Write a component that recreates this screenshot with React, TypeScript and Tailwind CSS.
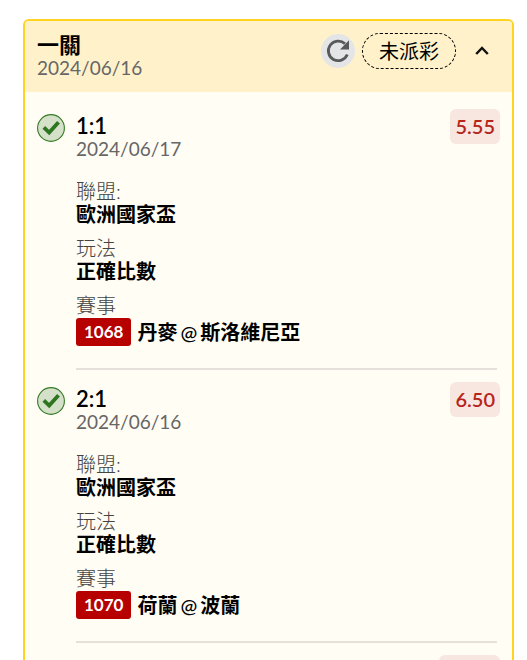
import React from 'react';

interface Selection {
  score: string;
  date: string;
  odds: string;
  league: string;
  market: string;
  matchId: string;
  home: string;
  away: string;
}

const selections: Selection[] = [
  { score: '1:1', date: '2024/06/17', odds: '5.55', league: '歐洲國家盃', market: '正確比數', matchId: '1068', home: '丹麥', away: '斯洛維尼亞' },
  { score: '2:1', date: '2024/06/16', odds: '6.50', league: '歐洲國家盃', market: '正確比數', matchId: '1070', home: '荷蘭', away: '波蘭' },
];

const CheckIcon = () => (
  <svg className="mt-[5px] h-7 w-7 shrink-0" viewBox="0 0 28 28" fill="none">
    <circle cx="14" cy="14" r="13.4" fill="#d5e0c8" stroke="#327a24" strokeWidth="1.1" />
    <path d="M6.8 13.4 12.2 18.6 21.5 8.2" stroke="#2e7520" strokeWidth="3.8" />
  </svg>
);

const SelectionRow: React.FC<{ item: Selection }> = ({ item }) => (
  <li className="flex gap-[11px] pt-3 pr-3 pl-3">
    <CheckIcon />
    <div className="min-w-0 flex-1">
      <div className="flex items-start justify-between">
        <div className="pt-[5px]">
          <h3 className="text-[22px] leading-[23px] font-semibold text-black">{item.score}</h3>
          <p className="text-[19px] leading-[23px] text-[#666]">{item.date}</p>
        </div>
        <span className="rounded-md bg-[#f8e7e0] px-[5px] text-[20px] leading-[35px] font-semibold text-[#b6251c]">{item.odds}</span>
      </div>
      <dl className="mt-5 mr-[3px] border-b-2 border-[#e5e1da] pb-[22px] text-[20px] leading-[23px]">
        <dt className="font-light text-[#444]">聯盟:</dt>
        <dd className="mb-[11px] font-bold text-black">{item.league}</dd>
        <dt className="font-light text-[#444]">玩法</dt>
        <dd className="mb-[11px] font-bold text-black">{item.market}</dd>
        <dt className="font-light text-[#444]">賽事</dt>
        <dd className="flex items-center gap-[6px] pt-px font-bold text-black">
          <span className="rounded-[3px] bg-[#b70000] px-2 text-[17px] leading-7 text-white">{item.matchId}</span>
          <span className="flex gap-[3px]">
            <span>{item.home}</span>
            <span className="font-medium">@</span>
            <span>{item.away}</span>
          </span>
        </dd>
      </dl>
    </div>
  </li>
);

export default function App() {
  return (
    <main className="h-screen overflow-hidden bg-white pt-[19px] pr-[13px] pl-[23px] font-['Lato','Noto_Sans_CJK_TC',sans-serif]">
      <section className="rounded-md border-2 border-[#ffd322] bg-[#fffdf4]">
        <header className="flex items-start justify-between rounded-t-sm bg-[#fff2cb] pt-3 pr-[22px] pb-[13px] pl-3">
          <div>
            <h2 className="text-[22px] leading-[23px] font-bold text-black">一關</h2>
            <p className="text-[19px] leading-[23px] text-[#666]">2024/06/16</p>
          </div>
          <div className="flex items-center">
            <button type="button" aria-label="重新整理" className="mr-[7px] flex h-[34px] w-[34px] items-center justify-center rounded-full bg-[#e4e5e7]">
              <svg className="h-[34px] w-[34px]" viewBox="0 0 34 34" fill="none">
                <path d="M26.3 20.5A9.8 9.8 0 1 1 24 9.8" stroke="#58595b" strokeWidth="2.8" />
                <path d="M28 6.3V15.5H19Z" fill="#58595b" />
              </svg>
            </button>
            <span className="rounded-full border border-dashed border-black px-4 text-[20px] leading-[34px] text-black">未派彩</span>
            <button type="button" aria-label="收合" className="ml-[18px] flex h-4 w-4 items-center justify-center">
              <svg className="h-4 w-4" viewBox="0 0 16 16" fill="none">
                <path d="M2.2 11 8 5l5.8 6" stroke="#111" strokeWidth="2.5" />
              </svg>
            </button>
          </div>
        </header>
        <ul className="pt-[5px]">
          {selections.map((item) => (
            <SelectionRow key={item.matchId} item={item} />
          ))}
          <li className="flex justify-end pt-3 pr-3">
            <span className="h-[35px] w-[61px] rounded-md bg-[#f8e7e0]" />
          </li>
        </ul>
      </section>
    </main>
  );
}
